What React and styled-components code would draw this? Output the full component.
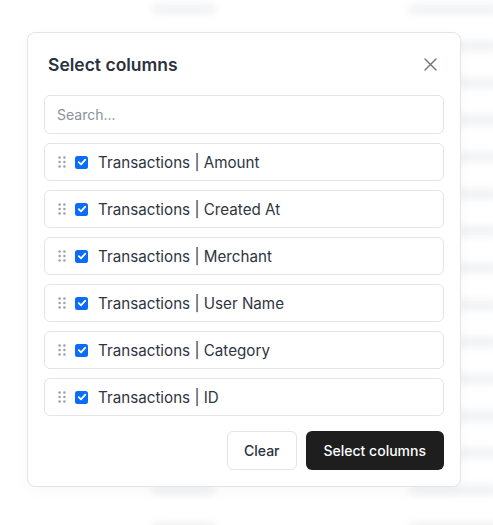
import styled, { createGlobalStyle } from 'styled-components'

const GlobalStyle = createGlobalStyle`
  html, body {
    margin: 0;
    padding: 0;
    background: #ffffff;
  }
  body {
    font-family: Inter, "Noto Sans", "Liberation Sans", sans-serif;
    -webkit-font-smoothing: antialiased;
  }
`

const columns = [
  'Transactions | Amount',
  'Transactions | Created At',
  'Transactions | Merchant',
  'Transactions | User Name',
  'Transactions | Category',
  'Transactions | ID',
]

const DragHandle = () => (
  <svg width="8" height="12" viewBox="0 0 8 12">
    {[1.5, 6, 10.5].map((cy) => (
      <g key={cy} fill="#9ca3af">
        <circle cx="1.6" cy={cy} r="1.3" />
        <circle cx="6.4" cy={cy} r="1.3" />
      </g>
    ))}
  </svg>
)

const CheckMark = () => (
  <svg width="10" height="10" viewBox="0 0 10 10">
    <path d="M1.8 5.2 L4 7.4 L8.3 2.6" fill="none" stroke="#fff" strokeWidth="1.8" strokeLinecap="round" strokeLinejoin="round" />
  </svg>
)

const CloseIcon = () => (
  <svg width="13" height="13" viewBox="0 0 13 13">
    <path d="M1 1 L12 12 M12 1 L1 12" stroke="#6b7280" strokeWidth="1.4" strokeLinecap="round" />
  </svg>
)

const App = () => {
  const rows = Array.from({ length: 15 })
  return (
    <>
      <GlobalStyle />
      <Page>
        <Backdrop>
          {rows.map((_, i) => (
            <BackRow key={i}>
              <BackCell $show={i === 0 || i >= 13} />
              <BackCell $show />
            </BackRow>
          ))}
        </Backdrop>

        <Modal>
          <Header>
            <Title>Select columns</Title>
            <CloseButton aria-label="Close">
              <CloseIcon />
            </CloseButton>
          </Header>

          <SearchInput placeholder="Search..." />

          <List>
            {columns.map((name) => (
              <Item key={name}>
                <DragHandle />
                <Check>
                  <CheckMark />
                </Check>
                <Label>{name}</Label>
              </Item>
            ))}
          </List>

          <Footer>
            <ClearButton>Clear</ClearButton>
            <PrimaryButton>Select columns</PrimaryButton>
          </Footer>
        </Modal>
      </Page>
    </>
  )
}

export default App

const Page = styled.div`
  position: relative;
  width: 493px;
  height: 525px;
  overflow: hidden;
  background: #ffffff;
`
const Backdrop = styled.div`
  display: flex;
  flex-direction: column;
  padding-top: 5px;
  filter: blur(4px);
  opacity: 0.45;
`
const BackRow = styled.div`
  display: grid;
  grid-template-columns: 152px 63px 195px 90px;
  height: 37px;
  align-items: start;
  & > :first-child {
    grid-column: 2;
  }
  & > :last-child {
    grid-column: 4;
  }
`
const BackCell = styled.div`
  height: 8px;
  border-radius: 3px;
  background: ${(p) => (p.$show ? '#d8dade' : 'transparent')};
`
const Modal = styled.div`
  position: absolute;
  left: 27px;
  top: 32px;
  width: 434px;
  box-sizing: border-box;
  padding: 16px;
  background: #ffffff;
  border: 1px solid #e3e4e8;
  border-radius: 8px;
  box-shadow: 0 4px 14px rgba(17, 24, 39, 0.03);
`
const Header = styled.div`
  display: flex;
  align-items: center;
  justify-content: space-between;
  height: 30px;
  padding: 0 4px;
  margin-bottom: 16px;
`
const Title = styled.h2`
  margin: 0;
  font-size: 17.5px;
  font-weight: 600;
  color: #2b3240;
`
const CloseButton = styled.button`
  display: flex;
  align-items: center;
  justify-content: center;
  padding: 0;
  width: 20px;
  height: 20px;
  border: none;
  background: none;
  cursor: pointer;
`
const SearchInput = styled.input`
  display: block;
  width: 100%;
  box-sizing: border-box;
  height: 39px;
  padding: 0 12px;
  border: 1px solid #e2e4e8;
  border-radius: 6px;
  font-family: inherit;
  font-size: 14px;
  color: #2b3240;
  outline: none;
  &::placeholder {
    color: #8b919c;
  }
`
const List = styled.div`
  display: flex;
  flex-direction: column;
  gap: 9px;
  margin-top: 9px;
`
const Item = styled.div`
  display: flex;
  align-items: center;
  height: 38px;
  box-sizing: border-box;
  padding: 0 0 0 13px;
  border: 1px solid #e2e4e8;
  border-radius: 6px;
  svg:first-child {
    flex: none;
  }
`
const Check = styled.span`
  display: flex;
  align-items: center;
  justify-content: center;
  width: 13px;
  height: 13px;
  margin-left: 9px;
  border-radius: 2.5px;
  background: #0b6cf7;
`
const Label = styled.span`
  margin-left: 10px;
  font-size: 15.2px;
  color: #2f3542;
`
const Footer = styled.div`
  display: flex;
  justify-content: flex-end;
  gap: 9px;
  margin-top: 15px;
`
const ClearButton = styled.button`
  height: 39px;
  padding: 0 16px;
  border: 1px solid #e2e4e8;
  border-radius: 6px;
  background: #ffffff;
  font-family: inherit;
  font-size: 14px;
  font-weight: 500;
  color: #2b3240;
  cursor: pointer;
`
const PrimaryButton = styled.button`
  height: 39px;
  padding: 0 18px;
  border: none;
  border-radius: 6px;
  background: #1e1e1e;
  font-family: inherit;
  font-size: 14px;
  font-weight: 500;
  color: #ffffff;
  cursor: pointer;
`
